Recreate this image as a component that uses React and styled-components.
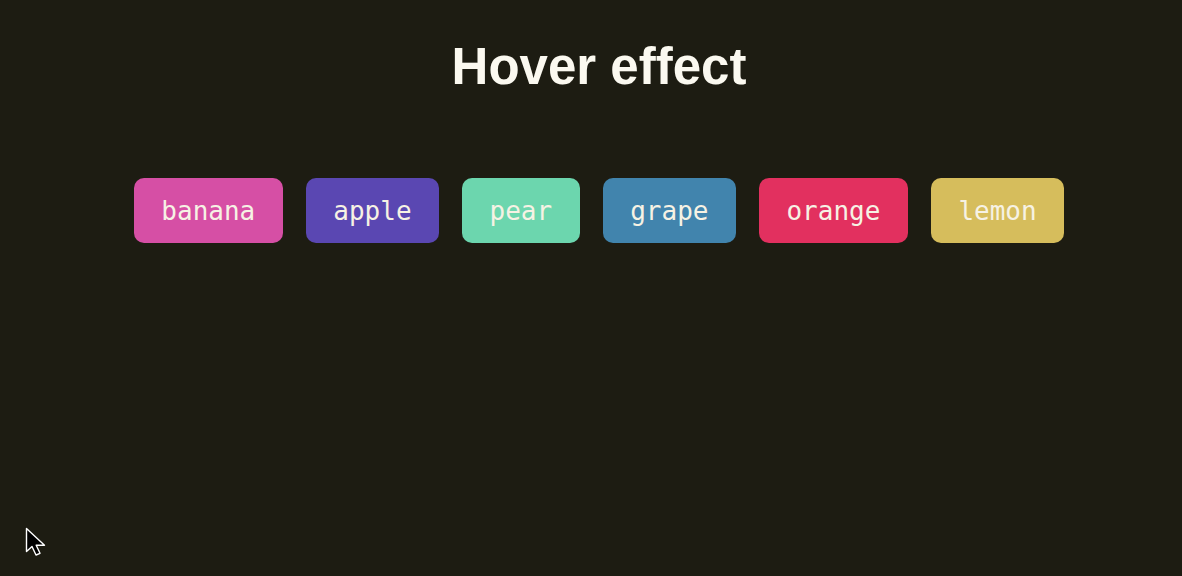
import React from 'react';
import styled, { createGlobalStyle } from 'styled-components';

const GlobalStyle = createGlobalStyle`
  html, body {
    margin: 0;
    padding: 0;
    background: #1d1c12;
  }
  body {
    height: 576px;
    overflow: hidden;
  }
`;

const PageStyle = styled.div`
  position: relative;
  height: 576px;
  padding: 37px 0 0 16px;
  box-sizing: border-box;
  display: flex;
  flex-direction: column;
  align-items: center;
`;

const TitleStyle = styled.h1`
  margin: 0;
  font-family: 'Liberation Sans', Arial, sans-serif;
  font-weight: 700;
  font-size: 51px;
  color: #fbf9f0;
`;

const RowStyle = styled.div`
  display: flex;
  gap: 23px;
  margin-top: 82px;
`;

const FruitButton = styled.button`
  height: 65px;
  padding: 0 27.5px;
  border: none;
  border-radius: 10px;
  background: ${(props) => props.color};
  color: #f6f2e4;
  font-family: 'DejaVu Sans Mono', monospace;
  font-size: 26px;
  cursor: pointer;
`;

const CursorStyle = styled.svg`
  position: absolute;
  left: 25px;
  top: 527px;
`;

const fruits = [
  { name: 'banana', color: '#d64fa5' },
  { name: 'apple', color: '#5a47b2' },
  { name: 'pear', color: '#6cd6ae' },
  { name: 'grape', color: '#4184ad' },
  { name: 'orange', color: '#e2305f' },
  { name: 'lemon', color: '#d6bd5c' },
];

const App = () => {
  return (
    <>
      <GlobalStyle />
      <PageStyle>
        <TitleStyle>Hover effect</TitleStyle>
        <RowStyle>
          {fruits.map(({ name, color }) => (
            <FruitButton key={name} color={color}>
              {name}
            </FruitButton>
          ))}
        </RowStyle>
        <CursorStyle width="24" height="32" viewBox="0 0 24 32">
          <path
            d="M1.5 1.5 L1.5 24.5 L7 19.5 L11 28 L15 26.3 L11.2 18.2 L19.5 18.2 Z"
            fill="#000"
            stroke="#fff"
            strokeWidth="1.4"
            strokeLinejoin="round"
          />
        </CursorStyle>
      </PageStyle>
    </>
  );
};

export default App;
